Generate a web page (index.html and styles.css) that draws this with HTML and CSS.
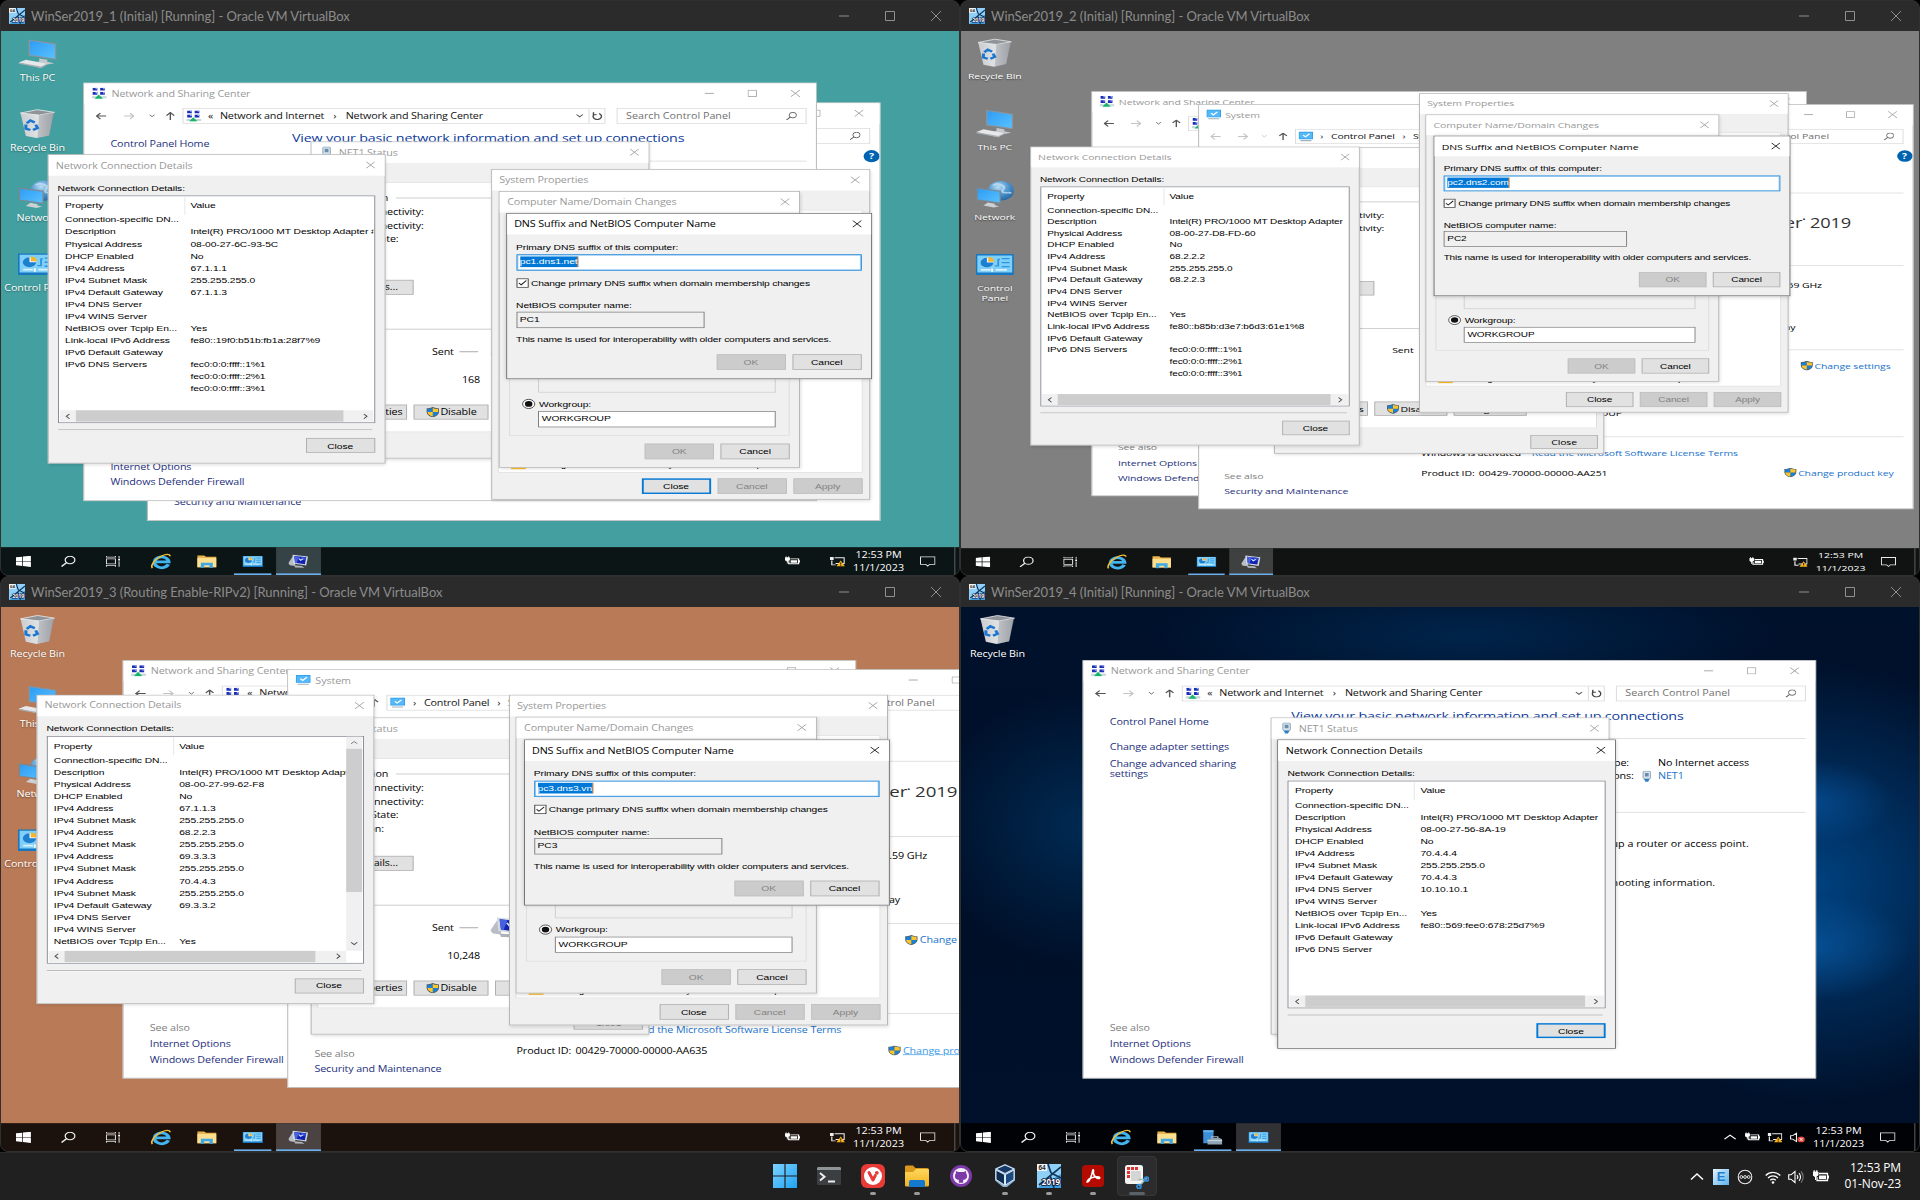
FILE: index.html
```html
<!DOCTYPE html>
<html lang="en">
<head>
<meta charset="utf-8">
<title>Virtual machines</title>
<link rel="stylesheet" href="styles.css">
</head>
<body>
<svg class="sprite" aria-hidden="true">
  <defs>
    <linearGradient id="g-screen" x1="0" y1="0" x2="1" y2="1"><stop offset="0" stop-color="#2f9cf4"/><stop offset="1" stop-color="#57c1ff"/></linearGradient>
    <linearGradient id="g-bin" x1="0" y1="0" x2="1" y2="0"><stop offset="0" stop-color="#c9ccd0"/><stop offset=".5" stop-color="#dfe1e3"/><stop offset="1" stop-color="#a4a8ac"/></linearGradient>
    <radialGradient id="g-globe" cx=".4" cy=".3" r=".8"><stop offset="0" stop-color="#b9ddf5"/><stop offset=".5" stop-color="#4d94cc"/><stop offset="1" stop-color="#1d5c9b"/></radialGradient>
    <linearGradient id="g-win" x1="0" y1="0" x2="1" y2="1"><stop offset="0" stop-color="#7cd3ff"/><stop offset="1" stop-color="#1fa3f5"/></linearGradient>
    <linearGradient id="g-fold" x1="0" y1="0" x2="0" y2="1"><stop offset="0" stop-color="#ffd75e"/><stop offset="1" stop-color="#f3b21f"/></linearGradient>
  </defs>
  <symbol id="i-net" viewBox="0 0 16 16">
    <path d="M1 0h5v4H1zM9 0h5v4H9zM1 6h5v4H1zM9 6h5v4H9z" fill="#1c2fb4"/>
    <path d="M4 0h2v2H4zM12 0h2v2h-2zM4 6h2v2H4zM12 6h2v2h-2z" fill="#8fa6f0"/>
    <path d="M0 12h16v3H0z" fill="#c3d6d8"/><path d="M7.500 9.500l4.500 6H3z" fill="#17b46a"/>
  </symbol>
  <symbol id="i-sys" viewBox="0 0 16 16">
    <path d="M0 1h16v11H0z" fill="#2e9bea"/><path d="M1 2h14v9H1z" fill="#55b8f8"/>
    <path d="M5 6l2.500 2.500L12 4" fill="none" stroke="#fff" stroke-width="1.600"/><path d="M2 13.200h12v1.600H2z" fill="#9fb2bf"/>
  </symbol>
  <symbol id="i-shield" viewBox="0 0 16 16">
    <path d="M8 .5C10 2 13 2.400 15 2.400v5C15 11.500 12 14.500 8 15.700 4 14.500 1 11.500 1 7.400v-5C3 2.400 6 2 8 .5z" fill="#48606f"/>
    <path d="M8 1.800V8H2V3.300C4.500 3.200 6.500 2.800 8 1.800zM8 8h6c0 3.200-2.500 5.700-6 6.600z" fill="#1b7fd6"/>
    <path d="M8 1.800c1.500 1 3.500 1.400 6 1.500V8H8zM2 8h6v6.600C4.500 13.700 2 11.200 2 8z" fill="#fdc52c"/>
  </symbol>
  <symbol id="i-plug" viewBox="0 0 16 16">
    <rect x="4" y=".5" width="8" height="11" rx="1.500" fill="#d5e4f0" stroke="#7d98b0"/><path d="M6 3h4v5H6z" fill="#6f8ba6"/>
    <path d="M5 11.500h6l-1.500 4h-3z" fill="#2f7fc4"/>
  </symbol>
  <symbol id="i-pc" viewBox="0 0 44 44">
    <path d="M12 1l31 6v24L12 25z" fill="#8a949d"/><path d="M13.500 3l28 5.500V29l-28-5.500z" fill="url(#g-screen)"/>
    <path d="M24 29l9 2v3l8 2-8 2-14-3 5-1.500z" fill="#c4c9cd"/><path d="M1 35l8-4 24 6-7 6z" fill="#e6e8ea"/><path d="M1 35l25 6 7-4v1.500L26 43 1 37z" fill="#aab0b5"/>
  </symbol>
  <symbol id="i-bin" viewBox="0 0 44 44">
    <path d="M3 6l37-1-5 34-14 4-12-3z" fill="url(#g-bin)"/><path d="M3 6l19-5 19 4-17 4z" fill="#8f9499"/><path d="M3 6l19-5 19 4-17 4z" fill="none" stroke="#eef0f1"/>
    <path d="M24 9l17-4-6 34-13 4z" fill="#999ea3" opacity=".45"/>
    <path d="M10 21l4-4 5 3M9 23l0 6 5 2M20 23l2 5-5 3" fill="none" stroke="#1b76d2" stroke-width="3.400"/>
  </symbol>
  <symbol id="i-globe" viewBox="0 0 44 44">
    <circle cx="29" cy="17" r="15" fill="url(#g-globe)"/><path d="M20 9c5-5 9-2 12 1s-3 6-1 9 8-1 10 2" fill="none" stroke="#c7e4f6" stroke-width="2.500" opacity=".7"/>
    <path d="M1 12l28 5v20L1 31z" fill="#7c8790"/><path d="M2.500 14l25 4.500V35l-25-5z" fill="url(#g-screen)"/><path d="M14 35l8 2v2l5 1.500-6 2-12-3z" fill="#ccd1d5"/>
  </symbol>
  <symbol id="i-cp" viewBox="0 0 44 32">
    <path d="M0 0h44v32H0z" fill="#1877c2"/><path d="M2 2h40v26H2z" fill="#7fd0f8"/>
    <circle cx="13" cy="13" r="7.500" fill="#e8f6fd"/><path d="M13 13V5.500A7.500 7.500 0 1 0 20.500 13z" fill="#1d7fd0"/><path d="M14.500 11.500V4.500a7 7 0 0 1 7 7z" fill="#f7b52c"/>
    <path d="M30 7h9M30 13h9M30 19h9M22 18h4V8h2" fill="none" stroke="#2f93dd" stroke-width="2"/><path d="M6 24h11M23 24h13" stroke="#d7f0fc" stroke-width="2.500"/><path d="M18 22h2v5h-2z" fill="#fff"/>
  </symbol>
  <symbol id="i-start" viewBox="0 0 16 16"><path d="M0 2.300l6.700-.9v6.200H0zM7.500 1.300L16 .1v7.500H7.500zM0 8.400h6.700v6.200L0 13.700zM7.500 8.400H16v7.500l-8.500-1.200z" fill="#fff"/></symbol>
  <symbol id="i-search" viewBox="0 0 16 16"><circle cx="9.800" cy="6.200" r="5.200" fill="none" stroke="currentColor" stroke-width="1.400"/><path d="M6 10L.7 15.300" stroke="currentColor" stroke-width="1.600"/></symbol>
  <symbol id="i-tasks" viewBox="0 0 16 16"><path d="M.7 4.500h9.600v7H.7zM.7.500v1.700h9.600V.5M.7 15.500v-1.700h9.600v1.700M14.200.5v3M14.200 8v7.500" fill="none" stroke="#e0e0e0" stroke-width="1.100"/><path d="M13.200 4.500h2V7h-2z" fill="#fff"/></symbol>
  <symbol id="i-ie" viewBox="0 0 24 24">
    <path d="M20.500 16.500A8.300 8.300 0 1 1 21 12.800H6" fill="none" stroke="#42b4f0" stroke-width="4.200"/>
    <path d="M2 22.500C-.5 19 4 9.500 11.500 4.500 17 .8 22.500-.2 22.500 4" fill="none" stroke="#f5bd32" stroke-width="2"/>
  </symbol>
  <symbol id="i-folder" viewBox="0 0 24 24"><path d="M1 3h8l2 2h12v16H1z" fill="#e8b64c"/><path d="M1 7h22v14H1z" fill="#fde08f"/><path d="M5 22v-8h14v8h-4v-4H9v4z" fill="#3fa9e8"/></symbol>
  <symbol id="i-server" viewBox="0 0 24 24"><path d="M1 1h12v20H1z" fill="#3b8fd8"/><path d="M1 1h12v3H1z" fill="#63b2ee"/><path d="M9 15l2-2h9l3 2v8H6v-8z" fill="#8fa4b5"/><path d="M6 16h17v2H6z" fill="#c3d0da"/><path d="M11 13v-2h7v2" fill="none" stroke="#a9b8c4" stroke-width="1.500"/></symbol>
  <symbol id="i-props" viewBox="0 0 24 24">
    <path d="M0 15l5-10 4 1-1 13-6-1z" fill="#b9bec6"/><path d="M5 2l18 2.500-2 14-15-3z" fill="#d4d8e0"/><path d="M7 3.800l14 2-1.600 10.500L8 14z" fill="#1022b0"/>
    <path d="M7 3.800l6 .9-3 9.700L8 14z" fill="#4660de"/><path d="M15 5l6 .8-.8 4.500L14 9z" fill="#2e49d0"/>
    <path d="M7 18l9 1 3 3-11-.5z" fill="#aeb3ba"/><path d="M12.500 7.500l2 3 3-2.500" fill="none" stroke="#e6ebff" stroke-width="1.300"/>
  </symbol>
  <symbol id="i-battery" viewBox="0 0 16 16"><path d="M6 4.500h8.500v7H4V8" fill="none" stroke="#fff" stroke-width="1.300"/><path d="M6 6.500h7v3.500H6z" fill="#fff"/><path d="M15 6.500h1v3h-1z" fill="#fff"/><path d="M0 3h5v3L2.500 8 0 6zM1.200 1v2M3.800 1v2M2.500 7v4" stroke="#fff" fill="#fff"/></symbol>
  <symbol id="i-netwarn" viewBox="0 0 16 16"><path d="M5 3h10.300v8H6M2 7v6h4" fill="none" stroke="#eee" stroke-width="1.300"/><path d="M0 2h4v4H0z" fill="#eee"/><path d="M11.500 7l4.500 8H7z" fill="#fbb418"/><path d="M11.500 9.500v3M11.500 13.200v1" stroke="#222" stroke-width="1.100"/></symbol>
  <symbol id="i-mute" viewBox="0 0 16 16"><path d="M.7 5.500H3L7 2v12L3 10.500H.7z" fill="none" stroke="#eee" stroke-width="1.200"/><circle cx="12" cy="11" r="4" fill="#e2453c"/><path d="M10.500 9.500l3 3M13.500 9.500l-3 3" stroke="#fff" stroke-width="1.200"/></symbol>
  <symbol id="i-action" viewBox="0 0 16 16"><path d="M.7 2h14.600v10H10l-2 2.300L6 12H.7z" fill="none" stroke="#e8e8e8" stroke-width="1.100"/></symbol>
  <symbol id="i-up" viewBox="0 0 16 16"><path d="M2 10.500L8 5l6 5.500" fill="none" stroke="currentColor" stroke-width="1.500"/></symbol>
  <symbol id="i-down" viewBox="0 0 16 16"><path d="M2 5l6 6 6-6" fill="none" stroke="currentColor" stroke-width="2.200"/></symbol>
  <symbol id="i-arrow" viewBox="0 0 16 16"><path d="M15.500 8H2M7 2.500L1.500 8 7 13.500" fill="none" stroke="currentColor" stroke-width="2"/></symbol>
  <symbol id="i-refresh" viewBox="0 0 16 16"><path d="M3.500 5A6 6 0 1 0 11 3M3 1v4.500h4.500" fill="none" stroke="currentColor" stroke-width="2"/></symbol>
  <symbol id="i-x" viewBox="0 0 10 10"><path d="M0 0l10 10M10 0L0 10" stroke="currentColor" fill="none"/></symbol>
  <symbol id="i-max" viewBox="0 0 10 10"><path d="M.5.5h9v9h-9z" stroke="currentColor" fill="none"/></symbol>
  <symbol id="i-min" viewBox="0 0 10 10"><path d="M0 5h10" stroke="currentColor" fill="none"/></symbol>
  <symbol id="i-vm" viewBox="0 0 24 24">
    <path d="M0 0h24v24H0z" fill="#3d9fe2"/><path d="M0 0h24v10L0 24z" fill="#8ed0f8"/><path d="M11 0l3 9M24 3L2 21M14 9l10 5M13 11l4 13" stroke="#12365c" stroke-width="1.700"/>
    <path d="M0 0h10v7H0z" fill="#f4f4f4"/><text x="1.500" y="6.300" class="vm-bits">64</text><text x="14" y="20.500" class="vm-year">2019</text>
  </symbol>
  <symbol id="i-win11" viewBox="0 0 24 24"><path d="M0 0h11.400v11.400H0zM12.600 0H24v11.400H12.600zM0 12.600h11.400V24H0zM12.600 12.600H24V24H12.600z" fill="url(#g-win)"/></symbol>
  <symbol id="i-term" viewBox="0 0 24 24"><rect y="3" width="24" height="18" rx="1.500" fill="#3b3f42"/><path d="M0 4.500C0 3.700.7 3 1.500 3h21c.8 0 1.500.7 1.500 1.500V6H0z" fill="#8e9396"/><path d="M3 9l4.500 3.700L3 16.500M11 17.500h7" fill="none" stroke="#eee" stroke-width="2"/></symbol>
  <symbol id="i-viv" viewBox="0 0 24 24"><rect width="24" height="24" rx="6" fill="#e83a36"/><circle cx="12" cy="12" r="9" fill="#fff"/><path d="M8 8.500l4 7.500 2.300-4.500" fill="none" stroke="#e83a36" stroke-width="3" stroke-linecap="round" stroke-linejoin="round"/><circle cx="15.800" cy="8.800" r="1.900" fill="#e83a36"/></symbol>
  <symbol id="i-files" viewBox="0 0 24 24"><path d="M0 3c0-1 .6-1.500 1.500-1.500H8L10.500 4H22c1.200 0 2 .8 2 2v6H0z" fill="#d9981a"/><path d="M0 8h8l3-3h11.500c1 0 1.500.6 1.500 1.500V21c0 1-.6 1.500-1.500 1.500h-21C.6 22.500 0 22 0 21z" fill="url(#g-fold)"/><path d="M4 23v-5c0-1.500 1-2 2-2h12c1 0 2 .5 2 2v5z" fill="#1579cf"/></symbol>
  <symbol id="i-git" viewBox="0 0 24 24"><circle cx="12" cy="12" r="11" fill="#7b3aa8"/><circle cx="12" cy="12" r="8" fill="#f3eef7"/><path d="M9.500 20v-3.500c-4-.6-5-3-4.500-5.500.2-1 .7-1.700 1-2.200l.1-2.600 2.600 1.100h6.600l2.600-1.100.1 2.600c.3.500.8 1.200 1 2.200.5 2.500-.5 4.900-4.500 5.500V20z" fill="#7b3aa8" transform="translate(1.800 1.800) scale(.85)"/></symbol>
  <symbol id="i-vbox" viewBox="0 0 24 24"><path d="M12 0l10 4.500v12L14 23h-4l-8-6.500v-12z" fill="#8fb0d0"/><path d="M12 1l9 4-9 4.500L3 5z" fill="#173a66" stroke="#d9e8f5"/><path d="M3 6l8.500 4.500V21L3 15.500z" fill="#0f2b50" stroke="#d9e8f5"/><path d="M21 6l-8.500 4.500V21l8.500-5.500z" fill="#1b4a80" stroke="#d9e8f5"/></symbol>
  <symbol id="i-pdf" viewBox="0 0 24 24"><rect x="1" y="1" width="22" height="22" rx="4" fill="#b30b00"/><path d="M6 18c2 1 5-7 5.500-11 .2-2 1.500-1.500 1 .5-1 4 4 8 6 6.800 1.200-1-1-2-5-1.200-3 .6-7 2.500-7.500 4.900z" fill="none" stroke="#fff" stroke-width="1.500"/></symbol>
  <symbol id="i-snip" viewBox="0 0 24 24"><rect width="18" height="19" rx="2.500" fill="#f4f4f4"/><path d="M2 2h3v3H2zM6 2h3v3H6zM10 2h3v3h-3zM2 6h3v3H2zM2 10h3v3H2z" fill="#dd3330"/><rect x="6" y="6" width="10" height="10" rx="1" fill="#d5d5d5"/><path d="M14 21l8-8M13.500 14.500l6 0" stroke="#9bb" stroke-width="1.500"/><circle cx="14" cy="21.500" r="2" fill="none" stroke="#2d8fe0" stroke-width="1.700"/><circle cx="21.500" cy="14" r="2" fill="none" stroke="#2d8fe0" stroke-width="1.700"/></symbol>
  <symbol id="i-copilot" viewBox="0 0 16 16"><circle cx="8" cy="8" r="6.800" fill="none" stroke="#eee" stroke-width="1.100"/><path d="M2 6.500h12v3H2z" fill="#202020"/><circle cx="4.300" cy="8" r="1.400" fill="none" stroke="#eee" stroke-width=".9"/><circle cx="8" cy="8" r="1.400" fill="none" stroke="#eee" stroke-width=".9"/><circle cx="11.700" cy="8" r="1.400" fill="none" stroke="#eee" stroke-width=".9"/></symbol>
  <symbol id="i-wifi" viewBox="0 0 16 16"><path d="M.7 6.500a10.300 10.300 0 0 1 14.600 0M3 9a7 7 0 0 1 10 0M5.300 11.300a3.800 3.800 0 0 1 5.400 0" fill="none" stroke="#fff" stroke-width="1.300"/><circle cx="8" cy="13.500" r="1.300" fill="#fff"/></symbol>
  <symbol id="i-vol" viewBox="0 0 16 16"><path d="M.7 5.800H3L7 2.500v11L3 10.200H.7z" fill="none" stroke="#fff" stroke-width="1.100"/><path d="M9 6a3 3 0 0 1 0 4M11 4.200a5.500 5.500 0 0 1 0 7.600" fill="none" stroke="#fff" stroke-width="1.100"/><path d="M13 2.500a8 8 0 0 1 0 11" fill="none" stroke="#777" stroke-width="1.100"/></symbol>
</svg>

<main class="host">
  <div class="machines" id="machines"></div>
  <footer class="hostbar">
    <nav class="apps">
      <span class="app"><svg><use href="#i-win11"/></svg></span>
      <span class="app"><svg><use href="#i-term"/></svg></span>
      <span class="app open"><svg><use href="#i-viv"/></svg></span>
      <span class="app open"><svg><use href="#i-files"/></svg></span>
      <span class="app"><svg><use href="#i-git"/></svg></span>
      <span class="app open"><svg><use href="#i-vbox"/></svg></span>
      <span class="app open"><svg><use href="#i-vm"/></svg></span>
      <span class="app open"><svg><use href="#i-pdf"/></svg></span>
      <span class="app open current"><svg><use href="#i-snip"/></svg></span>
    </nav>
    <div class="systray">
      <svg class="t-up"><use href="#i-up"/></svg>
      <span class="t-e">E</span>
      <svg class="t-cop"><use href="#i-copilot"/></svg>
      <svg class="t-wifi"><use href="#i-wifi"/></svg>
      <svg class="t-vol"><use href="#i-vol"/></svg>
      <svg class="t-bat"><use href="#i-battery"/></svg>
      <div class="hostclock"><span>12:53 PM</span><span>01-Nov-23</span></div>
    </div>
  </footer>
</main>
<script src="app.js"></script>
</body>
</html>
```
FILE: styles.css
```css
*, *::before, *::after { box-sizing: border-box; }

body {
  margin: 0;
  background: #000;
  font-family: "Open Sans", "Noto Sans", sans-serif;
  overflow: hidden;
}

.sprite { position: absolute; width: 0; height: 0; }
svg { display: block; flex: none; }
.vm-bits { font: bold 6.5px "Liberation Sans", sans-serif; fill: #222; }
.vm-year { font: bold 8px "Open Sans", sans-serif; fill: #fff; stroke: #113; stroke-width: 1.6px; paint-order: stroke; text-anchor: middle; }

/* host desktop */
.host { width: 1920px; height: 1200px; display: flex; flex-direction: column; }
.machines { display: grid; grid-template-columns: 960px 960px; grid-template-rows: 576px 576px; }

.vm {
  display: flex;
  flex-direction: column;
  border: 1px solid #303030;
  border-radius: 8px;
  background: #2b2b2b;
  overflow: hidden;
}
.vm-title { height: 30px; flex: none; display: flex; align-items: center; padding: 0 0 1px 8px; color: #8b8b8b; }
.vm-title > svg { width: 16px; height: 16px; margin-right: 6px; }
.vm-name { flex: 1; font: 13px/16px Lato, sans-serif; letter-spacing: -.04px; white-space: nowrap; }
.vm-ctl { display: flex; color: #8f8f8f; padding-right: 18px; gap: 36px; }
.vm-ctl svg { width: 10px; height: 10px; }
.vm-screen { flex: 1; min-height: 0; overflow: hidden; }

/* guest desktops are laid out at their own resolution and stretched to the VM window */
.guest { position: relative; width: 1024px; height: 768px; transform: scale(.9356, .7090); transform-origin: 0 0; overflow: hidden; font-size: 11.5px; letter-spacing: -.13px; line-height: 15px; color: #000; }
.guest.wide { width: 1050px; height: 795px; transform: scale(.9124, .6850); }
.teal { background: #44a0a0; --bar: #0c1515; --on: #364346; }
.grey { background: #808080; --bar: #101312; --on: #3f4141; }
.clay { background: #b97a57; --bar: #1b110d; --on: #4a4341; }
.hero {
  --bar: #010206; --on: #323234;
  background:
    radial-gradient(ellipse 90px 60px at 905px 275px, #0a5cae90, #0a5cae00),
    radial-gradient(ellipse 110px 75px at 905px 480px, #0c66b890, #0c66b800),
    radial-gradient(ellipse 260px 310px at 915px 390px, #00417e, #00417e00),
    radial-gradient(ellipse 330px 90px at 540px 40px, #00244a, #00244a00),
    radial-gradient(ellipse 170px 190px at 130px 310px, #002a52, #002a5200),
    linear-gradient(#00112c, #000f28 50%, #00112b);
}

.icons { position: absolute; left: 1px; top: 10px; width: 76px; display: flex; flex-direction: column; }
.wide .icons { left: 0; width: 74px; top: 10px; }
.icon { height: 99px; display: flex; flex-direction: column; align-items: center; color: #fff; text-shadow: 0 1px 2px #0008; white-space: nowrap; text-align: center; }
.wide .icon { height: 103px; }
.icon svg { width: 42px; height: 44px; margin-bottom: 4px; }
.clay .icon, .teal .icon { text-shadow: 0 1px 2px #0006; }

/* windows */
.win { position: absolute; display: flex; flex-direction: column; border: 1px solid #b3b3b3; background: #fff; white-space: nowrap; }
.win.dialog { background: #f0f0f0; box-shadow: 1px 2px 4px #0002; }
.win.active { border-color: #6d6d6d; box-shadow: 0 1px 5px #0003; }
.win-title { height: 29px; flex: none; background: #fff; color: #999; display: flex; align-items: center; padding: 0 10px 1px 8px; }
.active > .win-title { color: #000; }
.win-title > svg { width: 16px; height: 16px; margin-right: 5px; }
.win-title span { flex: 1; }
.win-title .c { width: 10px; height: 10px; margin: 0; }
.explorer > .win-title { padding-right: 17px; }
.explorer > .win-title .c + .c { margin-left: 36px; }

.form { flex: 1; display: flex; flex-direction: column; padding: 0 10px; font: 11px/14px "Liberation Sans", Arial, sans-serif; letter-spacing: -.1px; min-height: 0; }
.form.seg { font: 11.5px/15px "Open Sans", sans-serif; letter-spacing: -.13px; }

.btn { width: 74px; height: 22px; border: 1px solid #adadad; background: #e1e1e1; display: flex; align-items: center; justify-content: center; }
.btn.off { background: #ccc; border-color: #bfbfbf; color: #838383; }
.btn.focus { border: 2px solid #0078d7; }
.btn svg { width: 15px; height: 15px; margin-right: 1px; }
.btns { display: flex; justify-content: flex-end; gap: 7px; }

/* network connection details */
.details .label { margin-top: 10px; }
.list { margin-top: 4px; height: 321px; border: 1px solid #828790; background: #fff; display: grid; grid-template-columns: 1fr auto; grid-template-rows: 1fr 16px; padding: 0 1px 1px; }
.rows { overflow: hidden; min-width: 0; }
.row { display: grid; grid-template-columns: 134px 1fr; line-height: 17px; height: 17px; padding-left: 6px; }
.row.head { height: 25px; line-height: 26px; grid-template-columns: 127px 1fr; }
.row.head span + span { border-left: 1px solid #e5e5e5; padding-left: 6px; }
.hbar, .vbar { background: #f0f0f0; display: flex; align-items: center; color: #505050; }
.hbar svg, .vbar svg { width: 9px; height: 9px; margin: 4px; }
.thumb { background: #cdcdcd; }
.hbar .thumb { height: 16px; }
.hbar .last, .vbar .last { margin-left: auto; }
.vbar { width: 17px; flex-direction: column; }
.vbar .thumb { width: 17px; }
.vbar .last { margin: auto 0 6px; }
.r90 { transform: rotate(90deg); }
.r180 { transform: rotate(180deg); }
.r270 { transform: rotate(-90deg); }
.rule { margin: 9px 3px 10px 0; height: 2px; border-top: 1px solid #a0a0a0; background: #fff; flex: none; }
.details .btn { align-self: flex-end; flex: none; height: 21px; }

/* DNS suffix */
.dns .l1 { margin-top: 11px; }
.field { height: 23px; border: 1px solid #7a7a7a; background: #fff; padding: 2px 3px 0; }
.dns .field { margin-top: 3px; }
.dns .hot { border: 1px solid #0078d7; box-shadow: inset 0 0 0 1px #0078d755; }
.sel { background: #0078d7; color: #fff; border-right: 1px solid #ff8728; display: inline-block; height: 15px; line-height: 15px; }
.check { display: flex; align-items: center; margin-top: 10px; letter-spacing: -.21px; }
.box { width: 13px; height: 13px; border: 1px solid #333; background: #fff; margin-right: 3px; }
.box svg { width: 11px; height: 11px; }
.dns .l2 { margin-top: 18px; }
.dns .ro { width: 201px; background: #f0f0f0; margin-top: 2px; }
.dns .note { margin: 9px 0 14px; letter-spacing: -.21px; }

/* computer name */
.group { margin: 170px 0 11px; height: 145px; border: 1px solid #dcdcdc; padding: 60px 15px 0 30px; width: 300px; }
.group .field.ro { background: #f0f0f0; border-color: #ccc; width: 254px; }
.group .radio { display: flex; align-items: center; margin: 9px 0 3px -17px; }
.dot { width: 14px; height: 14px; border: 1px solid #333; border-radius: 50%; background: #fff; margin-right: 4px; padding: 2px; }
.dot::before { content: ""; display: block; width: 8px; height: 8px; border-radius: 50%; background: #111; }
.group .field { width: 254px; }

/* system properties */
.sysprops .form { padding: 0 7px 0 6px; }
.page { margin: 27px 0 8px; width: 390px; height: 371px; background: #fff; border: 1px solid #dcdcdc; display: flex; align-items: flex-end; padding: 0 0 4px 13px; }
.page i { width: 16px; height: 16px; background: #ffbf1f; margin-right: 12px; font: bold 12px/16px "Liberation Sans"; text-align: center; }

/* adapter status */
.status .form { padding: 27px 8px 0 6px; }
.sheet { width: 347px; height: 353px; background: #fff; border: 1px solid #dcdcdc; padding-left: 15px; }
.legend { display: flex; align-items: center; gap: 8px; margin: 14px 8px 4px 0; }
.legend::after { content: ""; flex: 1; border-top: 1px solid #bcbcbc; }
.sheet p { margin: 0 0 4.500px 6px; }
.sheet .wide-btn { width: 78px; height: 21px; margin: 11px 0 0 9px; }
.activity { margin-top: 48px; border-top: 1px solid #bcbcbc; margin-right: 8px; height: 107px; display: grid; grid-template-columns: 130px 39px 80px; align-content: start; padding-top: 14px; align-items: center; }
.activity .sent { text-align: right; }
.activity hr { width: 20px; margin: 0 0 0 6px; border: 0; border-top: 1px solid #888; }
.activity svg { width: 34px; height: 34px; }
.activity b { font-weight: 400; grid-column: 1 / 3; text-align: right; margin-top: 15px; width: 161px; }
.sheet .btns { justify-content: flex-start; }
.sheet .btns .btn { width: 80px; height: 21px; }
.status .end { margin: 10px -2px 0 auto; height: 20px; }

/* explorer windows */
.nav { height: 34px; flex: none; display: grid; grid-template-columns: 30px 30px 18px 22px 452px 203px; padding: 0 0 1px 3px; align-items: center; justify-items: center; color: #555; }
.nav > svg { width: 12px; height: 12px; }
.nav > .sm { width: 7px; height: 9px; }
.nav .dim { color: #c4c4c4; }
.addr { width: 452px; height: 22px; border: 1px solid #d9d9d9; margin-left: 4px; display: flex; align-items: center; padding-left: 3px; color: #111; letter-spacing: -.2px; }
.addr svg { width: 16px; height: 16px; }
.addr em { font-style: normal; width: 20px; text-align: center; }
.addr em.wide-sep { width: 23px; }
.addr .dd { width: 9px; height: 9px; margin: 0 5px 0 auto; color: #555; }
.addr .rf { width: 17px; height: 20px; padding: 4px 2px; border-left: 1px solid #d9d9d9; color: #444; }
.find { width: 203px; height: 22px; border: 1px solid #d9d9d9; margin-left: 28px; display: flex; align-items: center; justify-content: space-between; padding: 0 9px; color: #707070; letter-spacing: 0; }
.find svg { width: 12px; height: 12px; color: #555; }

.cols { flex: 1; display: grid; grid-template-columns: 222px 1fr; min-height: 0; overflow: hidden; }
.side { padding-left: 28px; display: flex; flex-direction: column; color: #1e2f7c; }
.side span { margin-bottom: 7.500px; }
.side .home { margin: 15px 0 21px; }
.side .see { margin-top: auto; color: #808080; }
.side .last { margin-bottom: 18px; }
.nsc-main h1 { margin: 3px 0 21px; font-size: 15.300px; line-height: 22px; font-weight: 400; letter-spacing: -.2px; color: #0f3c9c; }
.nsc-main hr, .sys-main hr { border: 0; border-top: 1px solid #d5d5d5; margin: 0; width: 100%; }
.nsc-main { padding-right: 10px; }
.facts { display: grid; grid-template-columns: 358px 34px 1fr; row-gap: 4px; padding: 26px 0 42px; }
.facts .k { text-align: right; width: 361px; }
.facts .k2 { text-align: right; width: 366px; }
.facts .icn { padding-left: 14px; }
.facts .icn svg { width: 16px; height: 16px; }
.link { color: #1a73cc; }
.nsc-main p { margin: 36px 0 0; text-align: right; width: 489px; letter-spacing: 0; }
.nsc-main p + p { margin-top: 40px; width: 453px; }

.sys-main { position: relative; padding: 65px 10px 0 22px; display: flex; flex-direction: column; }
.help { position: absolute; right: 0; top: 3px; width: 17px; height: 17px; border-radius: 50%; background: #0063b1; color: #fff; font-weight: 700; text-align: center; line-height: 17px; }
.brand { font-size: 20px; line-height: 28px; letter-spacing: -.2px; color: #333; margin: 29px 0 48px; text-align: right; width: 471px; height: 28px; }
.reg { font-size: 10px; line-height: 0; }
.sys-main .spec { text-align: right; margin: 20px 0 47px; width: 439px; }
.sys-main .touch { text-align: right; margin: 0 0 25px; width: 410px; }
.sys-main .change { display: flex; margin: 15px 0 54px 414px; }
.sys-main .change svg, .sys-main .key svg { width: 16px; height: 15px; margin-right: 1px; }
.sys-main .wg { text-align: right; width: 220px; margin-bottom: 27px; }
.sys-main .act { margin: 15px 0 14px; display: flex; }
.sys-main .act span { width: 121px; }
.sys-main .key { display: flex; }
.sys-main .pid { width: 63px; }
.sys-main .num { width: 333px; }
.hover { color: #3b9ae6; text-decoration: underline; }

/* guest taskbar */
.bar { position: absolute; left: 0; right: 0; bottom: 0; height: 40px; background: var(--bar); display: flex; color: #fff; }
.bar span { width: 48px; display: flex; align-items: center; justify-content: center; color: #eee; border-bottom: 0 solid #6cb0ee; }
.bar span svg { width: 16px; height: 16px; }
.bar .pin { margin-left: 1px; }
.bar .pin.first { margin-left: 3px; }
.bar .pin svg { width: 22px; height: 24px; }
.bar .run { width: 40px; margin: 0 4px 0 5px; border-bottom: 3px solid #6cb0ee; padding-top: 3px; }
.bar .on { background: var(--on); border-bottom: 3px solid #6cb0ee; padding-top: 3px; }
.bar .cpi svg { height: 16px; }
.tray { margin-left: auto; display: flex; align-items: center; }
.tray > svg { width: 16px; height: 20px; margin-right: 8px; }
.tray > .gap { margin-right: 32px; }
.gclock { width: 74px; margin: 0 0 0 -9px; display: flex; flex-direction: column; line-height: 18px; align-items: center; letter-spacing: 0; }
.tray > .act { width: 17px; margin: 0 20px 0 7px; }
.tray::after { content: ""; height: 40px; width: 5px; border-left: 1px solid #666; }

/* host taskbar */
.hostbar { height: 48px; background: #202020; border-top: 1px solid #2c2c2c; display: grid; grid-template-columns: 763px 396px 1fr; }
.apps { grid-column: 2; display: flex; }
.app { width: 44px; height: 47px; position: relative; display: flex; justify-content: center; padding-top: 11px; }
.app svg { width: 24px; height: 24px; }
.app.open::after { content: ""; position: absolute; left: 19px; bottom: 5px; width: 6px; height: 3px; border-radius: 2px; background: #9a9a9a; }
.app.current { width: 40px; height: 40px; margin: 3px 2px; padding-top: 8px; border: 1px solid #363636; border-radius: 4px; background: #2c2c2e; }
.app.current::after { left: 11px; width: 16px; bottom: 0; background: #5b6166; }
.systray { display: flex; align-items: center; justify-content: flex-end; padding-right: 19px; color: #fff; }
.systray svg { width: 16px; height: 16px; }
.t-up { margin-right: 8px; }
.t-e { width: 16px; height: 16px; background: linear-gradient(135deg, #e4f3fd, #5db2ec); color: #1c7fd0; font: bold 13px/16px "Liberation Sans", sans-serif; text-align: center; margin-right: 8px; }
.systray .t-cop { margin-right: 12px; }
.systray .t-wifi { margin-right: 7px; }
.systray .t-vol { margin-right: 9px; }
.systray .t-bat { margin-right: 8px; }
.hostclock { width: 64px; display: flex; flex-direction: column; align-items: flex-end; font-size: 12px; line-height: 16px; letter-spacing: -.1px; white-space: nowrap; padding-bottom: 1px; }
```
FILE: app.js
```javascript
const ic = (id, cls = '') => `<svg class="${cls}"><use href="#i-${id}"/></svg>`;

function win(kind, box, title, body, icon) {
  const [x, y, w, h] = box;
  const explorer = kind.includes('explorer');
  const controls = explorer ? ic('min', 'c') + ic('max', 'c') + ic('x', 'c') : ic('x', 'c');
  return `<section class="win ${kind}" style="left:${x}px;top:${y}px;width:${w}px;height:${h}px">
    <header class="win-title">${icon ? ic(icon) : ''}<span>${title}</span>${controls}</header>${body}</section>`;
}

const nav = (dim, crumbs) => `<div class="nav">${ic('arrow', dim ? 'dim' : '')}${ic('arrow', 'dim r180')}${ic('down', 'sm' + (dim ? ' dim' : ''))}${ic('arrow', 'r90')}
  <div class="addr">${crumbs}${ic('down', 'dd')}${ic('refresh', 'rf')}</div>
  <div class="find"><span>Search Control Panel</span>${ic('search')}</div></div>`;

const sharing = (x, y, h = 590) => win('explorer', [x, y, 784, h], 'Network and Sharing Center',
  nav(false, `${ic('net')}<em>«</em><span>Network and Internet</span><em class="wide-sep">›</em><span>Network and Sharing Center</span>`) +
  `<div class="cols"><div class="side"><span class="home">Control Panel Home</span><span>Change adapter settings</span>
    <span>Change advanced sharing<br>settings</span><span class="see">See also</span><span>Internet Options</span><span class="last">Windows Defender Firewall</span></div>
  <div class="nsc-main"><h1>View your basic network information and set up connections</h1><hr>
    <div class="facts"><span class="k">Access type:</span><span></span><span>No Internet access</span><span class="k2">Connections:</span><span class="icn">${ic('plug')}</span><span class="link">NET1</span></div><hr>
    <p>Set up a broadband, dial-up, or VPN connection; or set up a router or access point.</p>
    <p>Diagnose and repair network problems, or get troubleshooting information.</p></div></div>`, 'net');

const system = (x, y, h, id, hover) => win('explorer', [x, y, 784, h], 'System',
  nav(true, `${ic('sys')}<em>›</em><span>Control Panel</span><em>›</em><span>System and Security</span>`) +
  `<div class="cols"><div class="side"><span class="home">Control Panel Home</span><span class="see">See also</span><span class="last">Security and Maintenance</span></div>
  <div class="sys-main"><span class="help">?</span><hr><div class="brand">Windows Server<sup class="reg">•</sup> 2019</div><hr>
    <div class="spec">Intel(R) Core(TM) CPU @ 2.60GHz 2.59 GHz</div>
    <div class="touch">No Pen or Touch Input is available for this Display</div><hr>
    <div class="change link">${ic('shield')}Change settings</div><div class="wg">Workgroup: WORKGROUP</div><hr>
    <div class="act"><span>Windows is activated</span><a class="link">Read the Microsoft Software License Terms</a></div>
    <div class="key"><span class="pid">Product ID:</span><span class="num">${id}</span>${ic('shield')}<a class="link ${hover ? 'hover' : ''}">Change product key</a></div>
  </div></div>`, 'sys');

const status = (x, y, sent) => win('dialog status', [x, y, 362, 447], 'NET1 Status',
  `<div class="form seg"><div class="sheet"><div class="legend">Connection</div>
    <p>IPv4 Connectivity:</p><p>IPv6 Connectivity:</p><p>Media State:</p><p>Duration:</p><p>Speed:</p>
    <div class="btn wide-btn">Details...</div>
    <div class="activity"><span class="sent">Sent</span><hr>${ic('props')}<b>${sent}&nbsp;</b></div>
    <div class="btns"><div class="btn">${ic('shield')}Properties</div><div class="btn">${ic('shield')}Disable</div><div class="btn">Diagnose</div></div>
  </div><div class="btn end">Close</div></div>`, 'plug');

function details(box, d) {
  const rows = d.rows.map(([k, v]) => `<div class="row"><span>${k}</span><span>${v || ''}</span></div>`).join('');
  const vbar = d.vbar ? `<div class="vbar">${ic('up')}<div class="thumb" style="height:202px"></div>${ic('down', 'last')}</div>` : '<div></div>';
  return win('dialog details' + (d.active ? ' active' : ''), box, 'Network Connection Details',
    `<div class="form"><div class="label">Network Connection Details:</div>
     <div class="list"><div class="rows"><div class="row head"><span>Property</span><span>Value</span></div>${rows}</div>${vbar}
     <div class="hbar">${ic('down', 'r90')}<div class="thumb" style="width:${d.thumb}px"></div>${ic('down', 'last r270')}</div></div>
     <div class="rule"></div><div class="btn ${d.active ? 'focus' : ''}">Close</div></div>`);
}

const sysprops = (x, y, focus) => win('dialog sysprops', [x, y, 405, 466], 'System Properties',
  `<div class="form"><div class="page"><i>!</i>Changes will take effect after you restart this computer.</div>
   <div class="btns"><div class="btn ${focus ? 'focus' : ''}">Close</div><div class="btn off">Cancel</div><div class="btn off">Apply</div></div></div>`);

const naming = (x, y) => win('dialog naming', [x, y, 322, 390], 'Computer Name/Domain Changes',
  `<div class="form"><div class="group"><div class="field ro"></div><div class="radio"><span class="dot"></span>Workgroup:</div>
   <div class="field">WORKGROUP</div></div><div class="btns"><div class="btn off">OK</div><div class="btn">Cancel</div></div></div>`);

const dns = (x, y, suffix, name) => win('dialog dns active', [x, y, 391, 234], 'DNS Suffix and NetBIOS Computer Name',
  `<div class="form"><div class="l1">Primary DNS suffix of this computer:</div><div class="field hot"><span class="sel">${suffix}</span></div>
   <div class="check"><span class="box"><svg viewBox="0 0 11 11"><path d="M1.500 5.500L4 8l5.500-6" fill="none" stroke="#111" stroke-width="1.200"/></svg></span>Change primary DNS suffix when domain membership changes</div>
   <div class="l2">NetBIOS computer name:</div><div class="field ro">${name}</div>
   <div class="note">This name is used for interoperability with older computers and services.</div>
   <div class="btns"><div class="btn off">OK</div><div class="btn">Cancel</div></div></div>`);

const bar = (server) => `<div class="bar"><span>${ic('start')}</span><span>${ic('search')}</span><span>${ic('tasks')}</span>
  <span class="pin first">${ic('ie')}</span><span class="pin">${ic('folder')}</span>
  <span class="pin run ${server ? '' : 'cpi'}">${ic(server ? 'server' : 'cp')}</span><span class="pin on ${server ? 'cpi' : ''}">${ic(server ? 'cp' : 'props')}</span>
  <div class="tray">${server ? ic('up') + ic('battery') + ic('netwarn') + ic('mute') : ic('battery', 'gap') + ic('netwarn')}
  <div class="gclock"><div>12:53 PM</div><div>11/1/2023</div></div>${ic('action', 'act')}</div></div>`;

const icons = (list) => `<div class="icons">${list.map(([i, t]) => `<div class="icon">${ic(i)}${t}</div>`).join('')}</div>`;
const PC = ['pc', 'This PC'], BIN = ['bin', 'Recycle Bin'], NET = ['globe', 'Network'];

const addresses = (mac, ips, link, servers, suffix = '') => [
  ['Connection-specific DN...'], ['Description', 'Intel(R) PRO/1000 MT Desktop Adapter' + suffix], ['Physical Address', mac], ['DHCP Enabled', 'No'],
  ...ips, ['IPv4 WINS Server'], ['NetBIOS over Tcpip En...', 'Yes'], ['Link-local IPv6 Address', link], ['IPv6 Default Gateway'],
  ...servers];
const fec = [['IPv6 DNS Servers', 'fec0:0:0:ffff::1%1'], ['', 'fec0:0:0:ffff::2%1'], ['', 'fec0:0:0:ffff::3%1']];
const mask = ['IPv4 Subnet Mask', '255.255.255.0'];
const ip = (a) => ['IPv4 Address', a], gw = (a) => ['IPv4 Default Gateway', a], ns = (a) => ['IPv4 DNS Server', a];

const machines = [
  { name: 'WinSer2019_1 (Initial) [Running] - Oracle VM VirtualBox', theme: 'teal',
    body: icons([PC, BIN, NET, ['cp', 'Control Panel']]) + system(156, 101, 590, '00429-70000-00000-AA116') + sharing(88, 73) + status(331, 156, '168') +
      sysprops(523.5, 195) .replace('<div class="btn ">Close', '<div class="btn focus">Close') + naming(532, 226) + details([49.5, 174, 361, 436], { thumb: 286,
        rows: addresses('08-00-27-6C-93-5C', [ip('67.1.1.1'), mask, gw('67.1.1.3'), ns()], 'fe80::19f0:b51b:fb1a:28f7%9', fec, ' #2') }) +
      dns(539.5, 257, 'pc1.dns1.net', 'PC1') + bar() },
  { name: 'WinSer2019_2 (Initial) [Running] - Oracle VM VirtualBox', theme: 'grey wide',
    body: icons([BIN, PC, NET, ['cp', 'Control<br>Panel']]) + sharing(143, 88, 591) + system(259.5, 107, 591, '00429-70000-00000-AA251') + status(343, 169.5, '') +
      details([75.5, 169, 361, 436], { thumb: 299,
        rows: addresses('08-00-27-D8-FD-60', [ip('68.2.2.2'), mask, gw('68.2.2.3'), ns()], 'fe80::b85b:d3e7:b6d3:61e1%8', fec) }) +
      sysprops(502, 90.5) + naming(509, 121.5) + dns(518, 153, 'pc2.dns2.com', 'PC2') + bar() },
  { name: 'WinSer2019_3 (Routing Enable-RIPv2) [Running] - Oracle VM VirtualBox', theme: 'clay',
    body: icons([BIN, PC, NET, ['cp', 'Control Panel']]) + sharing(130, 75) + system(306, 88, 590, '00429-70000-00000-AA635', true) + status(331, 156, '10,248') +
      details([37.5, 123.5, 361, 436], { thumb: 268, vbar: true,
        rows: addresses('08-00-27-99-62-F8', [ip('67.1.1.3'), mask, ip('68.2.2.3'), mask, ip('69.3.3.3'), mask, ip('70.4.4.3'), mask, gw('69.3.3.2'), ns()], 'fe80::85b1:bb:19f3:db5d%13', fec) }) +
      sysprops(542.5, 124) + naming(550, 155) + dns(558.5, 187, 'pc3.dns3.vn', 'PC3') + bar() },
  { name: 'WinSer2019_4 (Initial) [Running] - Oracle VM VirtualBox', theme: 'hero',
    body: icons([BIN]) + sharing(130, 75) + status(331, 156, '') +
      details([338, 187, 362, 436], { thumb: 299, active: true,
        rows: addresses('08-00-27-56-8A-19', [ip('70.4.4.4'), mask, gw('70.4.4.3'), ns('10.10.10.1')], 'fe80::569:fee0:678:25d7%9', [['IPv6 DNS Server']]) }) + bar(true) },
];

document.getElementById('machines').innerHTML = machines.map((m) => `<article class="vm">
  <header class="vm-title">${ic('vm')}<span class="vm-name">${m.name}</span><div class="vm-ctl">${ic('min')}${ic('max')}${ic('x')}</div></header>
  <div class="vm-screen"><div class="guest ${m.theme}">${m.body}</div></div></article>`).join('');
```
